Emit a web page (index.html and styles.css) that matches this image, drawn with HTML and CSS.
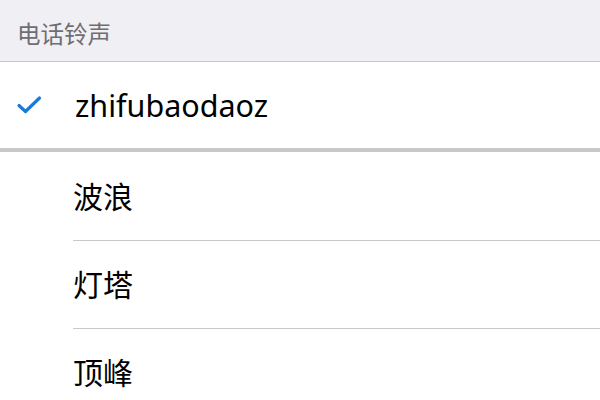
FILE: index.html
```html
<!DOCTYPE html>
<html lang="zh">
<head>
    <meta charset="UTF-8">
    <meta name="viewport" content="width=device-width, initial-scale=1.0">
    <title>电话铃声</title>
    <link rel="stylesheet" href="styles.css">
</head>
<body>
    <header class="section-header">电话铃声</header>

    <div class="selected-row">
        <svg class="check" width="26" height="20" viewBox="0 0 26 20">
            <path d="M3 10.5 L9.5 16.5 L23.5 3" fill="none" stroke="#1b7ad8" stroke-width="3.2" stroke-linecap="round" stroke-linejoin="round"/>
        </svg>
        <span class="row-label latin">zhifubaodaoz</span>
    </div>

    <ul class="tone-list">
        <li class="tone-item"><span class="row-label">波浪</span></li>
        <li class="tone-item"><span class="row-label">灯塔</span></li>
        <li class="tone-item"><span class="row-label">顶峰</span></li>
    </ul>
</body>
</html>
```

FILE: styles.css
```css
body {
    margin: 0;
    background-color: #ffffff;
    font-family: "Noto Sans", "Noto Sans CJK SC", sans-serif;
    overflow: hidden;
}

/* Grey section title */
.section-header {
    height: 62px;
    box-sizing: border-box;
    padding: 19px 0 0 17px;
    background-color: #efeff4;
    border-bottom: 1px solid #c8c7cc;
    color: #6d6d72;
    font-size: 23.5px;
    line-height: 30px;
}

/* Current ringtone row */
.selected-row {
    height: 90px;
    box-sizing: border-box;
    display: flex;
    align-items: center;
    border-bottom: 4px solid #c8c8c8;
}

.check {
    margin: 2px 33px 2px 16px;
}

.row-label {
    color: #000000;
    font-size: 30px;
    line-height: 36px;
}

.latin {
    font-size: 30.5px;
    margin-top: 0;
}

/* Other ringtones */
.tone-list {
    list-style: none;
    margin: 0;
    padding: 1px 0 0 73px;
}

.tone-item {
    height: 88px;
    box-sizing: border-box;
    display: flex;
    align-items: center;
    border-bottom: 1px solid #c8c7cc;
}
```
